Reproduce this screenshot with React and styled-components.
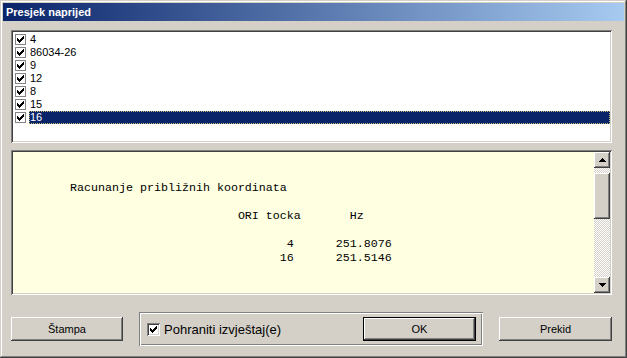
import React from 'react';
import styled, { createGlobalStyle } from 'styled-components';

const GlobalStyle = createGlobalStyle`
  html, body { margin: 0; padding: 0; background: #D4D0C8; }
  body { font-family: "Liberation Sans", Arial, sans-serif; }
  #root { width: 627px; height: 358px; }
`;

const raisedShadow = `inset -1px -1px #404040, inset 1px 1px #FFFFFF, inset -2px -2px #808080, inset 2px 2px #D4D0C8`;
const sunkenShadow = `inset 1px 1px #808080, inset -1px -1px #FFFFFF, inset 2px 2px #404040, inset -2px -2px #D4D0C8`;

const Window = styled.div`
  box-sizing: border-box;
  width: 627px;
  height: 358px;
  padding: 3px;
  background: #D4D0C8;
  box-shadow: inset -1px -1px #404040, inset 1px 1px #D4D0C8, inset -2px -2px #808080, inset 2px 2px #FFFFFF;
  display: flex;
  flex-direction: column;
`;

const TitleBar = styled.div`
  height: 18px;
  flex: none;
  background: linear-gradient(to right, #0A246A, #A6CAF0);
  color: #FFFFFF;
  font: bold 11px "Liberation Sans", Arial, sans-serif;
  line-height: 18px;
  padding-left: 3px;
  white-space: nowrap;
`;

const Body = styled.div`
  flex: 1;
  display: flex;
  flex-direction: column;
  padding: 9px 12px 9px 8px;
`;

const ListBox = styled.div`
  box-sizing: border-box;
  height: 113px;
  flex: none;
  background: #FFFFFF;
  box-shadow: ${sunkenShadow};
  padding: 3px 2px 0 4px;
`;

const ListRow = styled.div`
  display: flex;
  align-items: center;
  height: 13px;
`;

const ListCheck = styled.span`
  box-sizing: border-box;
  width: 11px;
  height: 11px;
  flex: none;
  border: 1px solid #848284;
  background: #FFFFFF;
  display: flex;
  align-items: center;
  justify-content: center;
`;

const ListLabel = styled.span`
  flex: 1;
  height: 13px;
  margin-left: 3px;
  padding-left: 1px;
  font-size: 11px;
  line-height: 13px;
  color: ${p => (p.$selected ? '#FFFFFF' : '#000000')};
  background: ${p => (p.$selected ? '#0A246A' : 'transparent')};
  outline: ${p => (p.$selected ? '1px dotted #C8C070' : 'none')};
  outline-offset: -1px;
`;

const ReportPane = styled.div`
  box-sizing: border-box;
  height: 145px;
  margin-top: 7px;
  flex: none;
  display: flex;
  padding: 2px;
  background: #FFFFE1;
  box-shadow: ${sunkenShadow};
`;

const ReportText = styled.pre`
  flex: 1;
  margin: 0;
  padding: 29px 0 0 57px;
  font-family: "Liberation Mono", "Courier New", monospace;
  font-size: 11.667px;
  line-height: 14px;
  color: #000000;
  overflow: hidden;
`;

const ScrollBar = styled.div`
  width: 16px;
  flex: none;
  display: flex;
  flex-direction: column;
`;

const ScrollButton = styled.div`
  width: 16px;
  height: 16px;
  flex: none;
  background: #D4D0C8;
  box-shadow: ${raisedShadow};
  display: flex;
  align-items: center;
  justify-content: center;
`;

const ScrollTrack = styled.div`
  flex: 1;
  background: repeating-conic-gradient(#D4D0C8 0 25%, #FFFFFF 0 50%) 0 0 / 2px 2px;
`;

const ScrollThumb = styled.div`
  width: 16px;
  height: 46px;
  margin-top: 5px;
  background: #D4D0C8;
  box-shadow: ${raisedShadow};
`;

const ButtonRow = styled.div`
  display: flex;
  align-items: center;
  height: 34px;
  margin-top: 17px;
  gap: 16px;
`;

const PushButton = styled.button`
  box-sizing: border-box;
  width: ${p => p.$w}px;
  height: 24px;
  flex: none;
  padding: 0;
  margin: 0;
  border: ${p => (p.$default ? '1px solid #000000' : 'none')};
  background: #D4D0C8;
  box-shadow: ${raisedShadow};
  font: 11px "Liberation Sans", Arial, sans-serif;
  color: #000000;
  cursor: default;
`;

const GroupBox = styled.div`
  box-sizing: border-box;
  width: 344px;
  height: 34px;
  flex: none;
  display: flex;
  align-items: center;
  padding: 0 7px 0 8px;
  box-shadow: inset 1px 1px #808080, inset -1px -1px #FFFFFF, inset 2px 2px #FFFFFF, inset -2px -2px #808080;
`;

const CheckBox3D = styled.span`
  width: 13px;
  height: 13px;
  flex: none;
  background: #FFFFFF;
  box-shadow: ${sunkenShadow};
  display: flex;
  align-items: center;
  justify-content: center;
`;

const CheckLabel = styled.span`
  margin-left: 4px;
  flex: 1;
  font-size: 13px;
  color: #000000;
  white-space: nowrap;
`;

const CHECK = ['......#', '.....##', '#...###', '##.###.', '#####..', '.###...', '..#....'];
const UP = ['...#...', '..###..', '.#####.', '#######'];

function PixelGlyph({ rows }) {
  const w = rows[0].length;
  const h = rows.length;
  const rects = [];
  rows.forEach((row, y) =>
    [...row].forEach((c, x) => {
      if (c === '#') rects.push(<rect key={`${x}-${y}`} x={x} y={y} width="1" height="1" fill="#000" />);
    })
  );
  return (
    <svg width={w} height={h} viewBox={`0 0 ${w} ${h}`} shapeRendering="crispEdges">
      {rects}
    </svg>
  );
}

const items = ['4', '86034-26', '9', '12', '8', '15', '16'];

const report = [
  'Racunanje približnih koordinata',
  '',
  '                        ORI tocka       Hz',
  '',
  '                               4      251.8076',
  '                              16      251.5146',
].join('\n');

export default function App() {
  return (
    <>
      <GlobalStyle />
      <Window>
        <TitleBar>Presjek naprijed</TitleBar>
        <Body>
          <ListBox>
            {items.map((it, i) => (
              <ListRow key={it}>
                <ListCheck>
                  <PixelGlyph rows={CHECK} />
                </ListCheck>
                <ListLabel $selected={i === items.length - 1}>{it}</ListLabel>
              </ListRow>
            ))}
          </ListBox>
          <ReportPane>
            <ReportText>{report}</ReportText>
            <ScrollBar>
              <ScrollButton>
                <PixelGlyph rows={UP} />
              </ScrollButton>
              <ScrollTrack>
                <ScrollThumb />
              </ScrollTrack>
              <ScrollButton>
                <PixelGlyph rows={[...UP].reverse()} />
              </ScrollButton>
            </ScrollBar>
          </ReportPane>
          <ButtonRow>
            <PushButton $w={112}>Štampa</PushButton>
            <GroupBox>
              <CheckBox3D>
                <PixelGlyph rows={CHECK} />
              </CheckBox3D>
              <CheckLabel>Pohraniti izvještaj(e)</CheckLabel>
              <PushButton $w={113} $default>OK</PushButton>
            </GroupBox>
            <PushButton $w={113}>Prekid</PushButton>
          </ButtonRow>
        </Body>
      </Window>
    </>
  );
}
